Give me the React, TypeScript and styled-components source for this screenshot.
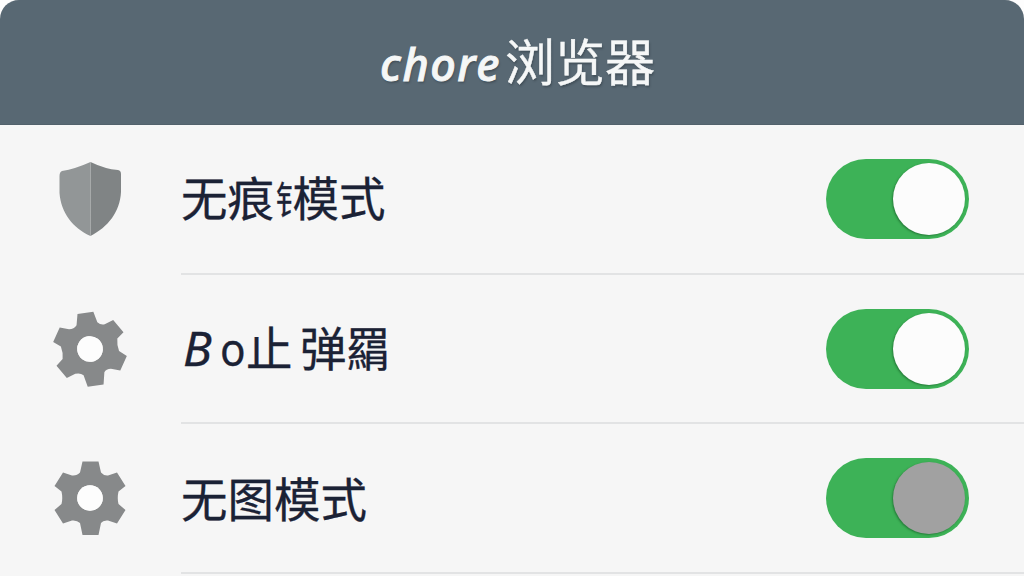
import React from 'react';
import styled, { createGlobalStyle } from 'styled-components';

const GlobalStyle = createGlobalStyle`
  * { box-sizing: border-box; }
  body { margin: 0; background: #fdfdfd; overflow: hidden; }
`;

const Screen = styled.main`
  width: 1024px;
  height: 576px;
  overflow: hidden;
  border-radius: 19px 19px 0 0;
  background: #f6f6f6;
  font-family: "Noto Sans", "Noto Sans CJK SC", sans-serif;
`;

const Header = styled.header`
  height: 125px;
  display: flex;
  align-items: center;
  justify-content: center;
  padding: 0 0 1px 11px;
  background: #586873;
  border-bottom: 1px solid #52616b;
`;

const Title = styled.h1`
  margin: 0;
  display: flex;
  align-items: baseline;
  gap: 4px;
  color: #f5f7f7;
  font-size: 50px;
  line-height: 64px;
  font-weight: 400;
  white-space: nowrap;
  text-shadow: 1px 2px 2px rgba(35, 45, 52, 0.4);
`;

const Brand = styled.span`
  font: italic 500 45px/64px "Noto Sans", sans-serif;
  letter-spacing: 1.5px;
  -webkit-text-stroke: 0.9px currentColor;
`;

const TitleCjk = styled.span`
  font-family: "Noto Sans CJK SC", sans-serif;
  -webkit-text-stroke: 0.4px currentColor;
`;

const Row = styled.section`
  height: 149.5px;
  display: grid;
  grid-template-columns: 181px 1fr;
`;

const IconCell = styled.div`
  display: flex;
  align-items: center;
  justify-content: center;
  padding: 0 1.5px 1px 0;
`;

const RowBody = styled.div`
  display: flex;
  align-items: center;
  justify-content: space-between;
  padding: 1px 55px 0 0;
  border-bottom: 2px solid #e2e3e4;
`;

const Label = styled.div`
  display: flex;
  align-items: baseline;
  padding-bottom: 3px;
  color: #1b2235;
  font: 400 46.5px/60px "Noto Sans CJK SC", sans-serif;
  -webkit-text-stroke: 0.3px currentColor;
  white-space: nowrap;
`;

const Glyph = styled.span<{ $width: number; $size?: number; $sx?: number; $raise?: number; $italic?: boolean; $latin?: boolean; $indent?: number }>`
  display: inline-block;
  width: ${p => p.$width}px;
  padding-left: ${p => p.$indent ?? 0}px;
  font-size: ${p => p.$size ?? 46.5}px;
  font-family: ${p => (p.$latin ? '"Noto Sans", sans-serif' : '"Noto Sans CJK SC", sans-serif')};
  font-style: ${p => (p.$italic ? 'italic' : 'normal')};
  transform: translateY(${p => -(p.$raise ?? 0)}px) scaleX(${p => p.$sx ?? 1});
  transform-origin: left center;
`;

const Track = styled.button`
  width: 143px;
  height: 80px;
  padding: 0 4.5px 0 0;
  border: 0;
  border-radius: 40px;
  background: #3db257;
  display: flex;
  align-items: center;
  justify-content: flex-end;
`;

const Knob = styled.span<{ $muted?: boolean }>`
  width: 72px;
  height: 72px;
  border-radius: 50%;
  background: ${p => (p.$muted ? '#a1a1a1' : '#fcfcfc')};
  box-shadow: -1px 1px 2px rgba(15, 75, 30, 0.5);
`;

const Shield = () => (
  <svg width="64" height="76" viewBox="0 0 64 76">
    <path d="M32.5 1Q47 8 60 9Q63 9.500 63 13V31C62 51 50 66 32.500 75Z" fill="#808485" />
    <path d="M32.500 1Q17 8 4 10Q1.500 11 1.500 15V32C3 52 15 67 32.500 75Z" fill="#929697" />
  </svg>
);

const Gear = ({ turn = 0 }: { turn?: number }) => (
  <svg width="76" height="76" viewBox="-38 -38 76 76">
    <g transform={`rotate(${turn})`}>
      <path
        fill="#87898a"
        fillRule="evenodd"
        d="M-7.500-36.500H8.500L11-25.500Q14-22 18-22.500L27-25.500L35.500-12L28.500-6.500Q27 0 28.500 6L35.500 12L27 25.500L18 22.500Q13 22 11 25L8.500 37H-7.500L-10 25Q-13 22 -18 22.500L-27 25.500L-35.500 12L-28.500 6Q-27 0 -28.500-6.500L-35.500-12L-27-25.500L-18-22.500Q-13-22 -10-25.500Z M12.800 0A12.800 12.800 0 1 0 -12.800 0A12.800 12.800 0 1 0 12.800 0Z"
      />
      <circle r="12.8" fill="#fdfdfd" />
    </g>
  </svg>
);

const Toggle = ({ muted }: { muted?: boolean }) => (
  <Track type="button" role="switch" aria-checked="true">
    <Knob $muted={muted} />
  </Track>
);

export default function App() {
  return (
    <>
      <GlobalStyle />
      <Screen>
        <Header>
          <Title>
            <Brand>chore</Brand>
            <TitleCjk>浏览器</TitleCjk>
          </Title>
        </Header>
        <Row>
          <IconCell><Shield /></IconCell>
          <RowBody>
            <Label>
              <span>无痕</span>
              <Glyph $width={18.5} $size={38} $sx={0.8} $raise={2} $indent={2}>钅</Glyph>
              <span>模式</span>
            </Label>
            <Toggle />
          </RowBody>
        </Row>
        <Row>
          <IconCell><Gear turn={-8} /></IconCell>
          <RowBody>
            <Label>
              <Glyph $width={39} $size={48} $indent={2} $italic $latin>B</Glyph>
              <Glyph $width={26} $size={46} $sx={0.92} $latin>o</Glyph>
              <Glyph $width={54}>止</Glyph>
              <Glyph $width={46}>弹</Glyph>
              <Glyph $width={44} $sx={0.95}>羂</Glyph>
            </Label>
            <Toggle />
          </RowBody>
        </Row>
        <Row>
          <IconCell><Gear /></IconCell>
          <RowBody>
            <Label>无图模式</Label>
            <Toggle muted />
          </RowBody>
        </Row>
      </Screen>
    </>
  );
}
